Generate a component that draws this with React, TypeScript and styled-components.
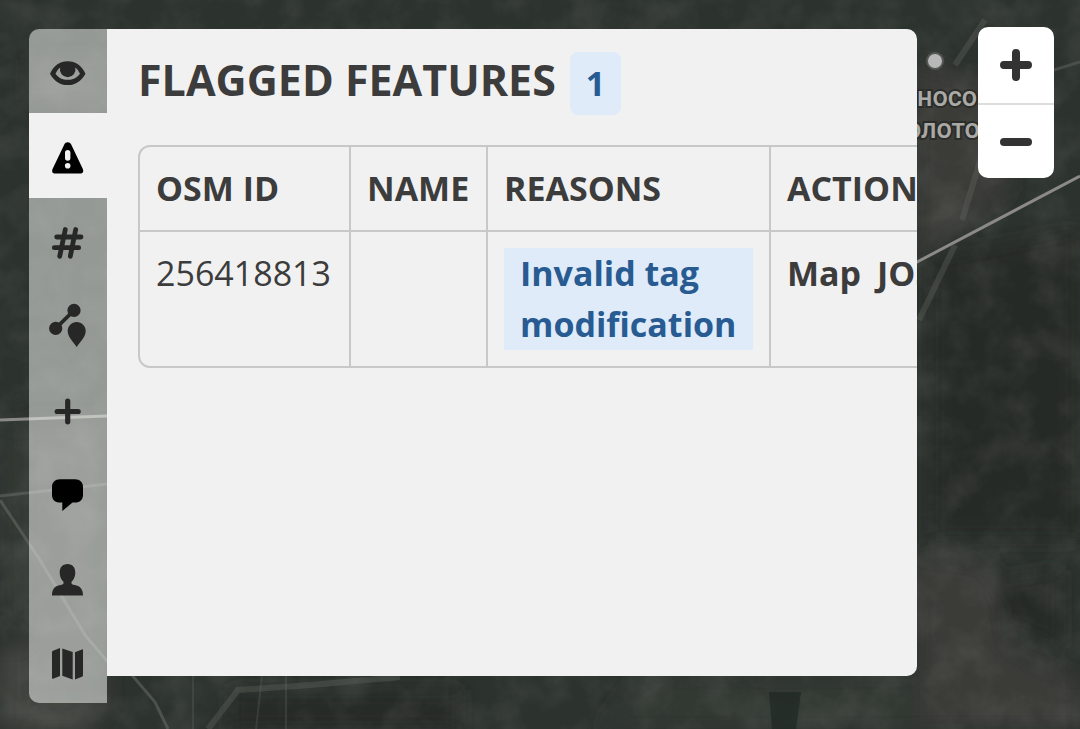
import React, { useState } from "react";
import styled, { createGlobalStyle } from "styled-components";

const GlobalStyle = createGlobalStyle`
  * { box-sizing: border-box; }
  body {
    margin: 0;
    background: #2c322e;
    color: #3c3c3c;
    font-family: "Open Sans", "Noto Sans", sans-serif;
    font-size: 34px;
    line-height: 51px;
  }
`;

const Screen = styled.main`
  position: relative;
  display: flex;
  align-items: flex-start;
  justify-content: space-between;
  gap: 61px;
  min-height: 100vh;
  padding: 27px 26px 26px 29px;
  overflow: hidden;
`;

const MapCanvas = styled.svg`
  position: absolute;
  inset: 0;
  width: 100%;
  height: 100%;
`;

const Workspace = styled.div`
  position: relative;
  display: flex;
  flex: 1;
  align-self: stretch;
  min-width: 0;
  padding-top: 2px;
`;

const TabBar = styled.nav`
  display: flex;
  flex-direction: column;
  flex: none;
  width: 78px;
  border-radius: 10px 0 0 10px;
  overflow: hidden;
`;

const TabButton = styled.button<{ $active: boolean }>`
  display: flex;
  flex: 1;
  align-items: center;
  justify-content: center;
  padding: 6px 0 0;
  border: 0;
  background: ${(p) => (p.$active ? "#f1f1f1" : "rgba(241, 245, 241, 0.53)")};
  color: ${(p) => (p.$active ? "#000" : "#272727")};
  cursor: pointer;
`;

const TabIcon = styled.svg`
  width: 36px;
  height: 36px;
  overflow: visible;
  fill: currentColor;
`;

const Panel = styled.section`
  flex: 1;
  min-width: 0;
  margin-bottom: 27px;
  padding: 23px 0 31px 31px;
  border-radius: 0 10px 10px 0;
  background: #f1f1f1;
  overflow: hidden;
`;

const PanelHeader = styled.header`
  display: flex;
  align-items: baseline;
  gap: 14px;
  margin-bottom: 30px;
`;

const Title = styled.h2`
  margin: 0;
  font-size: 43px;
  font-weight: 700;
  white-space: nowrap;
`;

const CountBadge = styled.span`
  padding: 6px 16px;
  border-radius: 8px;
  background: #dfebf9;
  color: #285b91;
  font-weight: 700;
`;

const FeatureTable = styled.table`
  width: 1000px;
  table-layout: fixed;
  border: 2px solid #c8c8c8;
  border-radius: 12px;
  border-spacing: 0;
`;

const HeadCell = styled.th`
  padding: 16px;
  border-bottom: 2px solid #c8c8c8;
  font-weight: 700;
  text-align: left;
  white-space: nowrap;

  & + & { border-left: 2px solid #c8c8c8; }
`;

const Cell = styled.td`
  padding: 16px;
  vertical-align: top;

  & + & { border-left: 2px solid #c8c8c8; }
`;

const Reason = styled.div`
  padding: 0 16px;
  background: #dfebf9;
  color: #285b91;
  font-weight: 700;
`;

const Actions = styled.div`
  display: flex;
  gap: 16px;
`;

const ActionLink = styled.a`
  color: inherit;
  font-weight: 700;
  text-decoration: none;
`;

const ZoomControls = styled.div`
  position: relative;
  display: flex;
  flex-direction: column;
  flex: none;
  width: 76px;
  border-radius: 10px;
  background: #fff;
  overflow: hidden;
`;

const ZoomButton = styled.button`
  display: flex;
  align-items: center;
  justify-content: center;
  height: 76px;
  padding: 0;
  border: 0;
  background: none;
  color: #333;
  cursor: pointer;

  & + & {
    height: 75px;
    border-top: 2px solid #ddd;
  }
`;

const ZoomIcon = styled.svg`
  width: 32px;
  height: 32px;
  fill: none;
  stroke: currentColor;
  stroke-width: 8;
  stroke-linecap: round;
`;

const tabs: { id: string; label: string; icon: React.ReactNode }[] = [
  {
    id: "details",
    label: "Details",
    icon: (
      <path
        fillRule="evenodd"
        d="M0 17.700C4.500 9 9.500 5.300 17.700 5.300S31 9 35.500 17.700C31 25.500 25.500 29 17.700 29S4.500 25.500 0 17.700ZM5.500 17.700C8.700 22 12.500 23.800 17.700 23.800S26.800 22 30 17.700C28.500 15 27.300 13 25.300 11.600A7.800 7.800 0 1 1 10.100 11.600C8.200 13 7 15 5.500 17.700Z"
      />
    ),
  },
  {
    id: "flagged",
    label: "Flagged features",
    icon: (
      <path
        fill="#000"
        fillRule="evenodd"
        d="M14.3 4.500C15.500 1.600 19.900 1.600 21.200 4.500L32.600 28.500C34 31.500 33 33.600 30 33.600H5.400C2.400 33.600 1.400 31.500 2.800 28.500ZM17.700 9.900A2.700 2.700 0 0 0 15 12.600V18A2.700 2.700 0 0 0 20.400 18V12.600A2.700 2.700 0 0 0 17.700 9.900ZM17.700 23A2.800 2.800 0 1 0 17.700 28.600A2.800 2.800 0 1 0 17.700 23Z"
      />
    ),
  },
  {
    id: "tags",
    label: "Tag changes",
    icon: (
      <path
        fill="none"
        stroke="currentColor"
        strokeWidth="4.8"
        strokeLinecap="round"
        d="M15.3 4.500L9.700 31.300M25.700 4.500L20.300 31.300M6.700 12H31M4.300 22.700H28.700"
      />
    ),
  },
  {
    id: "geometry",
    label: "Geometry changes",
    icon: (
      <>
        <path stroke="currentColor" strokeWidth="3.6" d="M5.700 19.400L24 1.400" />
        <circle cx="24" cy="1.4" r="6.6" />
        <circle cx="5.7" cy="19.4" r="6.6" />
        <path d="M26.700 13C31.700 13 35.700 17 35.700 22C35.700 27.500 31 32 26.700 38C22.400 32 17.700 27.500 17.700 22C17.700 17 21.700 13 26.700 13Z" />
      </>
    ),
  },
  {
    id: "other",
    label: "Other features",
    icon: (
      <path
        fill="none"
        stroke="currentColor"
        strokeWidth="5.2"
        strokeLinecap="round"
        d="M17.700 8.200V28.800M7.200 18.500H28.200"
      />
    ),
  },
  {
    id: "discussion",
    label: "Discussion",
    icon: (
      <path
        fill="#000"
        d="M10 2.300H25C30 2.300 33 5.500 33 10V18C33 22.500 30 25.600 25 25.600H22.500L12.300 34V25.600H10C5 25.600 2 22.500 2 18V10C2 5.500 5 2.300 10 2.300Z"
      />
    ),
  },
  {
    id: "user",
    label: "User",
    icon: (
      <path d="M17.500 2C22.500 2 25.300 5.500 25.300 10.500C25.300 14.500 24 17.500 21.500 19.700V21.500C22 22.700 24 22.900 26.500 23.400C31 24.500 33 28 33 33.400H2C2 28 4 24.500 8.500 23.400C11 22.900 13 22.700 13.500 21.500V19.700C11 17.500 9.700 14.500 9.700 10.500C9.700 5.500 12.500 2 17.500 2Z" />
    ),
  },
  {
    id: "map",
    label: "Map options",
    icon: (
      <path d="M2 6Q2.200 5 3 4.700L10 2.100V30L3 32.800Q2 33 2 32ZM12.300 2.400L22.700 6V33.400L12.300 29.800ZM25 6.300L32 3.400Q33 3.200 33 4V29.500Q33 30.300 32 30.700L25 33.400Z" />
    ),
  },
];

function SatelliteMap() {
  return (
    <MapCanvas viewBox="0 0 1080 729" preserveAspectRatio="xMidYMid slice" aria-hidden="true">
      <defs>
        <filter id="terrain" x="0" y="0" width="100%" height="100%">
          <feTurbulence type="fractalNoise" baseFrequency="0.03" numOctaves="6" seed="8" />
          <feColorMatrix values="0 0 0 0 0.42  0 0 0 0 0.42  0 0 0 0 0.39  0.9 0 0 0 -0.34" />
        </filter>
        <filter id="soft" x="-20%" y="-20%" width="140%" height="140%">
          <feGaussianBlur stdDeviation="9" />
        </filter>
      </defs>
      <rect width="1080" height="729" fill="#2c322e" />
      <g filter="url(#soft)">
        <path fill="#3a3b37" d="M915 60L1000 90L1010 190L917 260ZM917 555L990 565L1010 650L1080 680V729H917Z" />
        <path fill="#323731" d="M0 425L30 430V640L0 620ZM640 676H920V729H600Z" />
        <path fill="#42443f" d="M0 650L50 640L110 700L90 729H0Z" />
        <path fill="#3a3e3a" d="M30 60H107V110L30 100ZM30 420H107V700H30Z" />
        <path fill="#252c27" d="M930 260L1080 230V540L930 540ZM230 690H460V729H230ZM1000 580L1060 570V650L1000 620Z" />
      </g>
      <rect width="1080" height="729" filter="url(#terrain)" opacity="0.26" />
      <g fill="none" stroke="#6c706a">
        <path stroke="#8b8a86" strokeWidth="3" d="M0 420L107 416M900 271L1080 176" />
        <path strokeWidth="3" opacity="0.5" d="M0 496L107 484M0 500L40 560L85 635L107 661L125 667L155 702L168 729" />
        <path strokeWidth="6" opacity="0.3" d="M208 729L238 690L310 685L400 677M919 320L955 245M962 220L985 145M985 20L955 65" />
        <path strokeWidth="2" opacity="0.25" d="M193 676V729M262 676L256 729M286 676V729" />
        <path strokeWidth="3" opacity="0.4" d="M1054 70L1080 62" />
      </g>
      <path fill="#202824" opacity="0.7" d="M769 692H801L796 729H772Z" />
      <circle cx="935" cy="61" r="8" fill="#b8b8b8" stroke="#555753" strokeWidth="2" />
      <g
        fill="#aaa9a6"
        stroke="#2b2d2a"
        strokeWidth="4"
        paintOrder="stroke"
        fontFamily="Roboto, sans-serif"
        fontSize="27"
        fontWeight="500"
      >
        <text x="917" y="106">носо</text>
        <text x="906" y="138">олото</text>
      </g>
    </MapCanvas>
  );
}

export default function App() {
  const [activeTab, setActiveTab] = useState("flagged");

  return (
    <>
      <GlobalStyle />
      <Screen>
        <SatelliteMap />
        <Workspace>
          <TabBar aria-label="Changeset sections">
            {tabs.map((tab) => (
              <TabButton
                key={tab.id}
                type="button"
                aria-label={tab.label}
                aria-pressed={tab.id === activeTab}
                $active={tab.id === activeTab}
                onClick={() => setActiveTab(tab.id)}
              >
                <TabIcon viewBox="0 0 36 36" aria-hidden="true">
                  {tab.icon}
                </TabIcon>
              </TabButton>
            ))}
          </TabBar>
          <Panel>
            <PanelHeader>
              <Title>FLAGGED FEATURES</Title>
              <CountBadge>1</CountBadge>
            </PanelHeader>
            <FeatureTable>
              <colgroup>
                <col width="209" />
                <col width="137" />
                <col width="283" />
                <col />
              </colgroup>
              <thead>
                <tr>
                  <HeadCell scope="col">OSM ID</HeadCell>
                  <HeadCell scope="col">NAME</HeadCell>
                  <HeadCell scope="col">REASONS</HeadCell>
                  <HeadCell scope="col">ACTIONS</HeadCell>
                </tr>
              </thead>
              <tbody>
                <tr>
                  <Cell>256418813</Cell>
                  <Cell />
                  <Cell>
                    <Reason>Invalid tag modification</Reason>
                  </Cell>
                  <Cell>
                    <Actions>
                      <ActionLink href="#map">Map</ActionLink>
                      <ActionLink href="#josm">JOSM</ActionLink>
                    </Actions>
                  </Cell>
                </tr>
              </tbody>
            </FeatureTable>
          </Panel>
        </Workspace>
        <ZoomControls>
          <ZoomButton type="button" aria-label="Zoom in">
            <ZoomIcon viewBox="0 0 32 32" aria-hidden="true">
              <path d="M16 4V28M4 16H28" />
            </ZoomIcon>
          </ZoomButton>
          <ZoomButton type="button" aria-label="Zoom out">
            <ZoomIcon viewBox="0 0 32 32" aria-hidden="true">
              <path d="M4 16H28" />
            </ZoomIcon>
          </ZoomButton>
        </ZoomControls>
      </Screen>
    </>
  );
}
